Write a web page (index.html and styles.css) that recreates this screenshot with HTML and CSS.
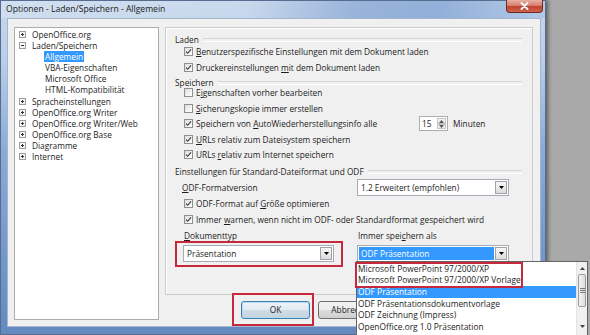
FILE: index.html
```html
<!DOCTYPE html>
<html>
<head>
<meta charset="utf-8">
<title>Optionen</title>
<link rel="stylesheet" href="styles.css">
</head>
<body>
<div class="window">
  <div class="titlebar">
    <span class="title">Optionen - Laden/Speichern - Allgemein</span>
    <div class="close"><svg width="9" height="8" viewBox="0 0 9 8"><path d="M1.5 1 L7.5 7 M7.5 1 L1.5 7" stroke="#fff" stroke-width="1.8" stroke-linecap="round"/></svg></div>
  </div>
  <div class="client">
    <div class="tree">
      <div class="node"><svg class="exp" width="7" height="7" viewBox="0 0 7 7"><rect x=".5" y=".5" width="6" height="6" fill="#f7f7f7" stroke="#9c9c9c"/><path d="M2 3.5h3M3.5 2v3" stroke="#333"/></svg><span>OpenOffice.org</span></div>
      <div class="node"><svg class="exp" width="7" height="7" viewBox="0 0 7 7"><rect x=".5" y=".5" width="6" height="6" fill="#f7f7f7" stroke="#9c9c9c"/><path d="M2 3.5h3" stroke="#333"/></svg><span>Laden/Speichern</span></div>
      <div class="node child sel"><span>Allgemein</span></div>
      <div class="node child"><span>VBA-Eigenschaften</span></div>
      <div class="node child"><span>Microsoft Office</span></div>
      <div class="node child"><span>HTML-Kompatibilität</span></div>
      <div class="node"><svg class="exp" width="7" height="7" viewBox="0 0 7 7"><rect x=".5" y=".5" width="6" height="6" fill="#f7f7f7" stroke="#9c9c9c"/><path d="M2 3.5h3M3.5 2v3" stroke="#333"/></svg><span>Spracheinstellungen</span></div>
      <div class="node"><svg class="exp" width="7" height="7" viewBox="0 0 7 7"><rect x=".5" y=".5" width="6" height="6" fill="#f7f7f7" stroke="#9c9c9c"/><path d="M2 3.5h3M3.5 2v3" stroke="#333"/></svg><span>OpenOffice.org Writer</span></div>
      <div class="node"><svg class="exp" width="7" height="7" viewBox="0 0 7 7"><rect x=".5" y=".5" width="6" height="6" fill="#f7f7f7" stroke="#9c9c9c"/><path d="M2 3.5h3M3.5 2v3" stroke="#333"/></svg><span>OpenOffice.org Writer/Web</span></div>
      <div class="node"><svg class="exp" width="7" height="7" viewBox="0 0 7 7"><rect x=".5" y=".5" width="6" height="6" fill="#f7f7f7" stroke="#9c9c9c"/><path d="M2 3.5h3M3.5 2v3" stroke="#333"/></svg><span>OpenOffice.org Base</span></div>
      <div class="node"><svg class="exp" width="7" height="7" viewBox="0 0 7 7"><rect x=".5" y=".5" width="6" height="6" fill="#f7f7f7" stroke="#9c9c9c"/><path d="M2 3.5h3M3.5 2v3" stroke="#333"/></svg><span>Diagramme</span></div>
      <div class="node"><svg class="exp" width="7" height="7" viewBox="0 0 7 7"><rect x=".5" y=".5" width="6" height="6" fill="#f7f7f7" stroke="#9c9c9c"/><path d="M2 3.5h3M3.5 2v3" stroke="#333"/></svg><span>Internet</span></div>
    </div>
    <div class="main">
      <div class="panel">
        <div class="gh g1"><span>Laden</span></div>
        <div class="rows r1">
          <div class="row"><span class="cb"><svg width="7" height="7" viewBox="0 0 7 7"><path d="M1 3.6 L2.7 5.3 L6 1.4" fill="none" stroke="#333" stroke-width="1.1"/></svg></span><span class="t"><u>B</u>enutzerspezifische Einstellungen mit dem Dokument laden</span></div>
          <div class="row"><span class="cb"><svg width="7" height="7" viewBox="0 0 7 7"><path d="M1 3.6 L2.7 5.3 L6 1.4" fill="none" stroke="#333" stroke-width="1.1"/></svg></span><span class="t">Druckereinstellungen <u>m</u>it dem Dokument laden</span></div>
        </div>
        <div class="gh g2"><span>Speichern</span></div>
        <div class="rows r2">
          <div class="row s"><span class="cb"></span><span class="t">E<u>i</u>genschaften vorher bearbeiten</span></div>
          <div class="row s"><span class="cb"></span><span class="t"><u>S</u>icherungskopie immer erstellen</span></div>
          <div class="row s"><span class="cb"><svg width="7" height="7" viewBox="0 0 7 7"><path d="M1 3.6 L2.7 5.3 L6 1.4" fill="none" stroke="#333" stroke-width="1.1"/></svg></span><span class="t autotext">Speichern von <u>A</u>utoWiederherstellungsinfo alle</span><span class="spin"><span class="sv">15</span><span class="sbtns"><span class="sb"><svg width="5" height="3" viewBox="0 0 5 3"><path d="M0 3h5L2.5 0z" fill="#555"/></svg></span><span class="sb"><svg width="5" height="3" viewBox="0 0 5 3"><path d="M0 0h5L2.5 3z" fill="#555"/></svg></span></span></span><span class="unit">Minuten</span></div>
          <div class="row s"><span class="cb"><svg width="7" height="7" viewBox="0 0 7 7"><path d="M1 3.6 L2.7 5.3 L6 1.4" fill="none" stroke="#333" stroke-width="1.1"/></svg></span><span class="t"><u>U</u>RLs relativ zum Dateisystem speichern</span></div>
          <div class="row s"><span class="cb"><svg width="7" height="7" viewBox="0 0 7 7"><path d="M1 3.6 L2.7 5.3 L6 1.4" fill="none" stroke="#333" stroke-width="1.1"/></svg></span><span class="t">URLs <u>r</u>elativ zum Internet speichern</span></div>
        </div>
        <div class="gh g3"><span>Einstellungen für Standard-Dateiformat und ODF</span></div>
        <div class="rows r3">
          <div class="row lbl"><span class="lbltext"><u>O</u>DF-Formatversion</span><span class="combo"><span class="cv">1.2 Erweitert (empfohlen)</span><span class="cbtn"><svg width="5" height="3" viewBox="0 0 5 3"><path d="M0 0h5L2.5 3z" fill="#000"/></svg></span></span></div>
          <div class="row"><span class="cb"><svg width="7" height="7" viewBox="0 0 7 7"><path d="M1 3.6 L2.7 5.3 L6 1.4" fill="none" stroke="#333" stroke-width="1.1"/></svg></span><span class="t">ODF-Format auf <u>G</u>röße optimieren</span></div>
          <div class="row"><span class="cb"><svg width="7" height="7" viewBox="0 0 7 7"><path d="M1 3.6 L2.7 5.3 L6 1.4" fill="none" stroke="#333" stroke-width="1.1"/></svg></span><span class="t">Immer <u>w</u>arnen, wenn nicht im ODF- oder Standardformat gespeichert wird</span></div>
        </div>
        <div class="doclabels"><span class="dl1"><u>D</u>okumenttyp</span><span>Immer spei<u>c</u>hern als</span></div>
        <div class="doccombos">
          <div class="redbox rb-doc">
            <span class="combo wide"><span class="cv">Präsentation</span><span class="cbtn"><svg width="5" height="3" viewBox="0 0 5 3"><path d="M0 0h5L2.5 3z" fill="#000"/></svg></span></span>
          </div>
          <span class="combo saveas"><span class="cv sel">ODF Präsentation</span><span class="cbtn"><svg width="5" height="3" viewBox="0 0 5 3"><path d="M0 0h5L2.5 3z" fill="#000"/></svg></span></span>
        </div>
      </div>
      <div class="buttons">
        <div class="redbox rb-ok"><span class="btn def">OK</span></div>
        <span class="btn">Abbrechen</span>
      </div>
    </div>
  </div>
</div>
<div class="dropdown">
  <div class="dd-items">
    <div class="dd-item">Microsoft PowerPoint 97/2000/XP</div>
    <div class="dd-item">Microsoft PowerPoint 97/2000/XP Vorlage</div>
    <div class="dd-item sel">ODF Präsentation</div>
    <div class="dd-item">ODF Präsentationsdokumentvorlage</div>
    <div class="dd-item">ODF Zeichnung (Impress)</div>
    <div class="dd-item">OpenOffice.org 1.0 Präsentation</div>
  </div>
  <div class="dd-scroll">
    <div class="sb-arrow"><svg width="5" height="3" viewBox="0 0 5 3"><path d="M0 3h5L2.5 0z" fill="#444"/></svg></div>
    <div class="sb-track"><div class="sb-thumb"><svg width="5" height="5" viewBox="0 0 5 5"><path d="M0 .5h5M0 2.5h5M0 4.5h5" stroke="#777"/></svg></div></div>
    <div class="sb-arrow down"><svg width="5" height="3" viewBox="0 0 5 3"><path d="M0 0h5L2.5 3z" fill="#444"/></svg></div>
  </div>
  <div class="dd-mark"></div>
</div>
</body>
</html>
```
FILE: styles.css
```css
* { box-sizing: border-box; }
html, body { margin: 0; padding: 0; }
body {
  width: 590px;
  height: 335px;
  overflow: hidden;
  position: relative;
  background: #a9a9a9;
  font-family: "Open Sans", "Noto Sans", sans-serif;
  font-size: 8.3px;
  color: #1c1c1c;
}
u { text-decoration-thickness: 1px; text-underline-offset: 1px; }

.window {
  width: 546px;
  height: 335px;
  display: flex;
  flex-direction: column;
  border: 1px solid #566d90;
  background: linear-gradient(to bottom, #c7d8ec 0, #b9cee8 60px, #8aabd6 150px, #6489c0 100%);
  box-shadow: 2px 0 4px rgba(0, 0, 0, 0.45);
}
.titlebar {
  height: 17px;
  flex: none;
  display: flex;
  justify-content: space-between;
  align-items: flex-start;
  background: linear-gradient(to right, rgba(255,255,255,0.2) 0, rgba(255,255,255,0.05) 45%, rgba(50,100,175,0.3) 65%, rgba(60,110,185,0.38) 80%, rgba(80,130,200,0.15) 100%);
}
.title {
  padding-left: 5px;
  line-height: 16px;
  font-size: 8.6px;
  color: #1a1a1a;
}
.close {
  width: 37px;
  height: 13px;
  margin-top: -1px;
  margin-right: 2px;
  border: 1px solid #6f2b22;
  border-top: none;
  border-radius: 0 0 4px 4px;
  background: linear-gradient(to bottom, #e9b0a4 0, #d7806f 45%, #c0432f 55%, #d0624c 100%);
  display: flex;
  align-items: center;
  justify-content: center;
}
.client {
  flex: 1;
  margin: 0 4px 7px 6px;
  border: 1px solid #a4b6cf;
  background: #f0f0f0;
  padding: 8px 7px 0 6px;
  display: flex;
  align-items: flex-start;
}
.tree {
  width: 145px;
  height: 293px;
  flex: none;
  background: #fff;
  border: 1px solid #acacac;
  padding-top: 0.5px;
}
.node {
  height: 11.18px;
  line-height: 11.18px;
  display: flex;
  align-items: center;
  white-space: nowrap;
  padding-left: 4px;
}
.exp { margin-right: 6px; flex: none; }
.node.child { padding-left: 29px; }
.node.child span { padding: 0 1px; line-height: 11px; }
.node.sel span { background: #3399ff; color: #fff; }

.main {
  width: 368px;
  margin-left: 6px;
  display: flex;
  flex-direction: column;
}
.panel {
  height: 268px;
  border: 1px solid #cbcbcb;
  box-shadow: inset 1px 1px 0 #fff;
  background: #f0f0f0;
  padding: 6px 10px 0 9px;
  display: flex;
  flex-direction: column;
}
.gh {
  height: 11px;
  line-height: 11px;
  display: flex;
  align-items: center;
  white-space: nowrap;
}
.gh::after {
  content: "";
  flex: 1;
  height: 2px;
  margin-left: 4px;
  border-top: 1px solid #d5d5d5;
  border-bottom: 1px solid #ffffff;
}
.r1 { margin-top: -2px; }
.g2 { margin-top: 2px; }
.r2 { margin-top: -3px; }
.g3 { margin-top: 3.5px; }
.r3 { margin-top: 2px; }
.row {
  height: 16px;
  display: flex;
  align-items: center;
  padding-left: 9px;
  white-space: nowrap;
}
.row.s { height: 15.5px; }
.t { white-space: pre; }
.cb {
  width: 9px;
  height: 9px;
  flex: none;
  margin-right: 3px;
  border: 1px solid #8e8f8f;
  background: linear-gradient(135deg, #dcdcdc 0, #f4f4f4 60%, #ffffff 100%);
  display: flex;
  align-items: center;
  justify-content: center;
}
.autotext { width: 223px; flex: none; }
.spin {
  width: 29px;
  height: 15px;
  flex: none;
  border: 1px solid #abadb3;
  background: #fff;
  display: flex;
}
.sv { flex: 1; padding-left: 2px; line-height: 13px; }
.sbtns { width: 11px; display: flex; flex-direction: column; padding: 1px; }
.sb {
  flex: 1;
  border: 1px solid #c4c4c4;
  background: linear-gradient(#f8f8f8, #e6e6e6);
  display: flex;
  align-items: center;
  justify-content: center;
}
.unit { margin-left: 5px; }
.row.lbl { padding-left: 7px; }
.lbltext { width: 175px; flex: none; }
.combo {
  width: 152px;
  height: 17px;
  flex: none;
  border: 1px solid #a5acb5;
  background: #fff;
  display: flex;
  padding: 1px;
}
.cv { flex: 1; padding-left: 2px; line-height: 13px; white-space: nowrap; }
.cv.sel { background: #3399ff; color: #fff; margin-right: 1px; }
.cbtn {
  width: 12px;
  flex: none;
  border: 1px solid #a2a2a2;
  background: linear-gradient(#f7f7f7, #dcdcdc);
  display: flex;
  align-items: center;
  justify-content: center;
}
.doclabels {
  margin-top: 3px;
  height: 11px;
  line-height: 11px;
  display: flex;
  padding-left: 9px;
  white-space: nowrap;
}
.dl1 { width: 174px; flex: none; }
.doccombos { display: flex; align-items: flex-start; }
.redbox { border: 2px solid #c6283c; }
.rb-doc {
  width: 168px;
  height: 26px;
  padding: 2px 0 0 6px;
}
.combo.wide { width: 151px; }
.combo.saveas { margin-left: 14px; margin-top: 4px; }

.buttons {
  margin-top: -2px;
  padding-left: 67px;
  display: flex;
  align-items: center;
}
.rb-ok { width: 82px; height: 33px; padding: 6px 0 0 7px; }
.btn {
  display: block;
  width: 69px;
  height: 18px;
  flex: none;
  line-height: 16px;
  text-align: center;
  border: 1px solid #707070;
  border-radius: 3px;
  background: linear-gradient(#f3f3f3 0, #ebebeb 50%, #dddddd 51%, #cfcfcf 100%);
  margin-left: 4px;
  white-space: nowrap;
}
.btn.def {
  margin-left: 0;
  border-color: #3c7fb1;
  background: linear-gradient(#eef3f7 0, #e2eaf0 50%, #d1dce5 51%, #c6d3dd 100%);
  box-shadow: inset 0 0 0 1px #b7dcf0;
}

.dropdown {
  position: absolute;
  left: 356px;
  top: 261px;
  width: 232px;
  height: 76px;
  border: 1px solid #646464;
  background: #fff;
  display: flex;
}
.dd-items { flex: 1; padding-top: 0.5px; }
.dd-item {
  height: 11.7px;
  line-height: 11.7px;
  padding-left: 1px;
  white-space: nowrap;
  font-size: 8.4px;
}
.dd-item.sel { background: #3399ff; color: #fff; }
.dd-scroll {
  width: 11px;
  flex: none;
  background: #f0f0f0;
  border-left: 1px solid #e3e3e3;
  display: flex;
  flex-direction: column;
}
.sb-arrow {
  height: 12px;
  display: flex;
  align-items: center;
  justify-content: center;
}
.sb-arrow.down { height: 13px; margin-bottom: 3px; }
.sb-track { flex: 1; }
.sb-thumb {
  height: 33px;
  margin: 0 1px;
  border: 1px solid #9c9c9c;
  border-radius: 2px;
  background: linear-gradient(to right, #f2f2f2, #dcdcdc);
  display: flex;
  align-items: center;
  justify-content: center;
}
.dd-mark {
  position: absolute;
  left: -2px;
  top: 0;
  width: 168px;
  height: 26px;
  border: 2px solid #c6283c;
}
```
